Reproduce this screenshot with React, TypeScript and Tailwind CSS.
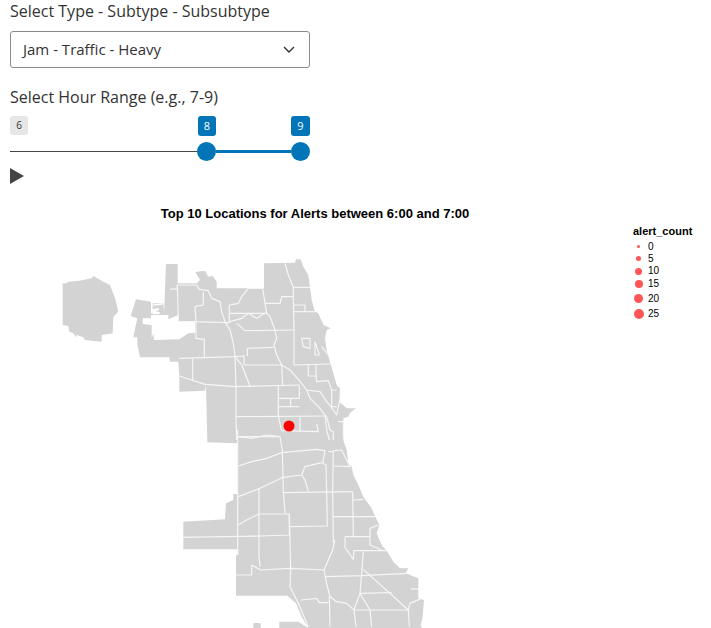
import React from "react";

const z3Lines = [
  "0,118 22,116 22,105 80,105 88,118 115,122 125,145 150,155 155,185 165,215 180,240 190,280 195,320 198,410 198,500 200,570",
  "75,170 100,165 100,125",
  "75,170 78,215 170,218 180,218",
  "78,215 78,265 103,268 103,322",
  "22,105 25,214 78,215",
  "28,325 195,320 222,318 222,345 335,345",
  "232,318 232,295 310,292",
  "178,165 178,215",
  "178,190 290,190",
  "178,165 205,160 215,140 235,115 278,115 290,190 300,200 315,240 320,265 312,285 320,315 335,345 360,360 395,400 410,420 420,445 445,470 465,495 470,540",
  "180,215 215,205 235,190 260,205 285,190",
  "200,220 225,242 372,240",
  "285,160 330,160 335,140 370,140 372,240 372,345",
  "370,112 420,112",
  "370,165 405,165 405,185",
  "372,185 435,185",
  "345,40 355,75 370,112 370,140",
  "395,265 420,265 420,295 400,290 395,265",
  "435,275 448,315 435,315 435,275",
  "455,290 475,315",
  "372,345 480,342",
  "415,345 415,378 438,378 438,345",
  "438,378 440,395 475,392 485,420 500,420",
  "195,320 215,345 240,408",
  "28,378 105,403 195,410 390,405",
  "68,325 68,392",
  "335,345 338,405",
  "325,408 325,500",
  "325,445 388,445 388,408",
  "362,445 362,470",
  "325,470 388,470",
  "198,500 470,498",
  "390,498 390,542",
  "325,500 335,542 445,545 440,522",
  "410,420 450,425 470,455 483,470 500,495 508,455",
  "485,420 485,470 500,470",
  "200,560 240,560 330,560",
  "470,500 480,540 490,545 490,570",
  "505,515 520,515 520,560",
  "470,540 478,570",
];

const z4Lines = [
  "203,0 203,375",
  "203,20 245,25 290,15 330,20 337,60 340,185 345,250",
  "205,108 245,95 290,85 335,68 440,58 465,62 458,100 468,105 470,185",
  "205,200 270,175 340,142 395,135",
  "395,135 405,150 415,185",
  "395,135 405,110 455,98",
  "340,188 548,185",
  "475,65 490,65 488,180 490,340",
  "540,110 490,108",
  "490,62 515,60 540,110",
  "267,175 267,380 270,410",
  "205,285 230,270 267,252 358,252 358,315 270,318 40,322",
  "358,252 362,415 360,470 385,520 415,590",
  "470,185 472,288 358,290",
  "490,260 615,260",
  "548,185 550,320",
  "550,210 580,208",
  "525,320 600,320 600,295 625,285",
  "600,320 600,345 635,360",
  "525,320 525,352 550,388 552,362 650,362",
  "495,330 488,360 475,390 462,420 362,415 272,420 245,405 245,435 198,435",
  "580,365 575,430 570,490 552,540",
  "462,420 470,462 480,500 500,515 530,520 552,540 558,590",
  "465,440 575,437 715,430",
  "580,418 715,540",
  "570,490 665,488",
  "570,490 600,540 605,590",
  "552,540 715,540 718,590",
  "715,540 720,520 755,505",
  "393,510 440,505 448,518 475,518",
  "478,500 480,590",
  "722,477 750,477",
];

const legend: [string, number, number][] = [
  ["0", 3, 11],
  ["5", 5, 13],
  ["10", 7, 12],
  ["15", 8, 13],
  ["20", 9, 17],
  ["25", 10, 13],
];

const chartMap = (
  <svg className="block" width="630" height="403" viewBox="0 225 630 403">
    <g transform="translate(170 250) scale(0.33333)">
      <polygon
        fill="#d3d3d3"
        points="-322,100 -310,100 -305,95 -272,92 -235,85 -230,78 -200,95 -180,105 -165,145 -155,185 -170,200 -172,250 -205,255 -205,275 -255,270 -260,262 -280,255 -282,262 -290,250 -302,245 -305,228 -322,225"
      />
      <polygon
        fill="#d3d3d3"
        points="-12,42 23,42 23,100 80,100 90,90 76,66 105,62 115,80 128,78 140,95 140,115 232,115 282,115 282,40 375,38 378,28 392,28 400,50 415,75 420,112 425,150 435,185 445,190 460,225 482,235 470,240 465,265 470,300 480,335 490,370 500,405 510,415 508,455 530,475 558,475 540,488 535,500 520,505 520,570 530,600 535,640 545,650 550,675 565,705 580,740 605,775 615,798 628,825 620,850 635,885 650,902 670,935 690,955 715,955 708,968 720,975 745,985 745,1045 762,1050 758,1100 752,1125 755,1134 415,1134 385,1115 328,1115 328,1134 272,1134 272,1120 250,1118 250,1134 415,1134 395,1100 378,1060 352,1037 198,1037 198,915 205,915 205,898 40,898 40,815 165,808 168,760 190,750 190,732 203,732 203,580 112,577 108,405 105,422 28,425 28,378 25,335 0,335 -2,322 -90,322 -98,282 -98,262 -110,262 -98,205 -118,198 -102,148 -57,155 -57,190 -52,190 -52,160 -20,160 -18,190 -15,120"
      />
      <polygon
        fill="#ffffff"
        points="-82,205 -57,205 -57,195 -5,195 -5,208 25,195 25,215 75,213 75,248 55,250 28,268 -48,270 -50,250 -55,265 -55,225 -82,222"
      />
      <polygon fill="#ffffff" points="-52,178 -35,174 -32,180 -45,184 -32,186 -30,192 -52,192" />
      <polygon fill="#ffffff" points="-50,163 -22,160 -22,164 -50,167" />
      <g fill="none" stroke="#f6f6f6" strokeWidth="3.6" strokeLinejoin="round">
        {z3Lines.map((p, i) => (
          <polyline key={i} points={p} />
        ))}
        <g transform="translate(0 540)">
          {z4Lines.map((p, i) => (
            <polyline key={i} points={p} />
          ))}
        </g>
      </g>
    </g>
    <circle cx="289" cy="426" r="5.5" fill="#ff0000" />
  </svg>
);

export default function App() {
  return (
    <div className="w-[711px] h-[628px] overflow-hidden bg-white font-['Open_Sans',sans-serif] text-[#333333]">
      <div className="w-[300px] ml-[10px]">
        <div className="h-[22px] text-[16px] leading-[22px]">Select Type - Subtype - Subsubtype</div>
        <div className="mt-[9px] h-[37px] flex items-center justify-between pl-[12px] pr-[14px] border border-[#8a8a8a] rounded-[3px] text-[15px]">
          <span>Jam - Traffic - Heavy</span>
          <svg width="12" height="8" viewBox="0 0 12 8" fill="none" stroke="#333333" strokeWidth="1.4">
            <path d="M1 1l5 5 5-5" />
          </svg>
        </div>
        <div className="mt-[18px] h-[22px] text-[16px] leading-[22px]">Select Hour Range (e.g., 7-9)</div>
        <div className="mt-[8px] flex items-start">
          <div className="w-[18px] h-[19px] rounded-[3px] bg-[#e6e6e6] flex items-center justify-center text-[10px]">6</div>
          <div className="ml-[170px] w-[18px] h-[20px] rounded-[3px] bg-[#0275b8] flex items-center justify-center text-[11px] text-white">8</div>
          <div className="ml-auto w-[19px] h-[20px] rounded-[3px] bg-[#0275b8] flex items-center justify-center text-[11px] text-white">9</div>
        </div>
        <div className="mt-[6px] flex items-center">
          <div className="w-[187px] h-px bg-[#444444]" />
          <div className="w-[19px] h-[19px] rounded-full bg-[#0275b8]" />
          <div className="flex-1 h-[3px] bg-[#0275b8]" />
          <div className="w-[19px] h-[19px] rounded-full bg-[#0275b8]" />
        </div>
        <svg className="block mt-[7px]" width="14" height="16" viewBox="0 0 14 16">
          <path d="M0 0L14 8L0 16Z" fill="#444444" />
        </svg>
      </div>
      <div className="flex mt-[21px] font-['Liberation_Sans',sans-serif] text-black">
        <div className="w-[630px] shrink-0">
          <div className="h-[20px] text-center text-[13px] leading-[18px] font-bold">
            Top 10 Locations for Alerts between 6:00 and 7:00
          </div>
          {chartMap}
        </div>
        <div className="ml-[3px] mt-[20px]">
          <div className="text-[11px] leading-[12px] font-bold">alert_count</div>
          <div className="mt-[4px]">
            {legend.map(([label, size, h]) => (
              <div key={label} className="flex items-center" style={{ height: h }}>
                <div className="w-[11px] flex justify-center">
                  <div className="rounded-full bg-[#ff5555]" style={{ width: size, height: size }} />
                </div>
                <span className="ml-[4px] text-[10px] leading-none">{label}</span>
              </div>
            ))}
          </div>
        </div>
      </div>
    </div>
  );
}
